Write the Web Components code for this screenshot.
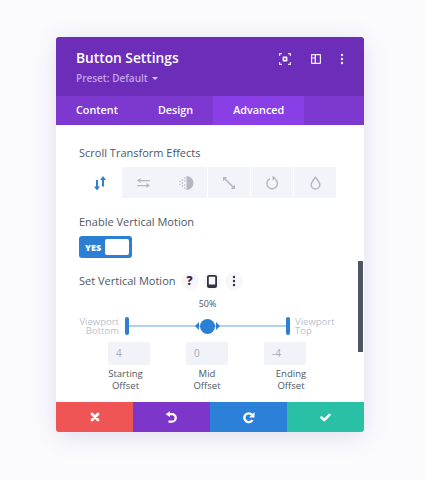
<!DOCTYPE html>
<html><head><meta charset="utf-8">
<style>
html,body{margin:0;padding:0;height:100%;background:#fbfbfe;font-family:"Open Sans","Liberation Sans",sans-serif}
body{display:flex;flex-direction:column;align-items:flex-start;padding:37px 0 0 56px;box-sizing:border-box;height:480px;overflow:hidden}
</style></head><body>
<button-settings></button-settings>
<script>
const I={
frame:'<svg width="12" height="12" viewBox="0 0 12 12" fill="none" stroke="#e6d8f8" stroke-width="1.2"><path d="M.6 3V.6H3M9 .6h2.400V3M11.400 9v2.400H9M3 11.400H.6V9"/><rect x="3.600" y="3.600" width="4.800" height="4.800" rx="1" fill="#fff" stroke="none"/><circle cx="6" cy="6" r="1" fill="#6c2eb9" stroke="none"/></svg>',
cols:'<svg width="10" height="10" viewBox="0 0 10 10"><path fill="#f3ecfc" fill-rule="evenodd" d="M1 0h8a1 1 0 0 1 1 1v8a1 1 0 0 1-1 1H1a1 1 0 0 1-1-1V1a1 1 0 0 1 1-1zM1.200 1.200v2.200h2.400V1.200zM1.200 4.600v4.200h2.400V4.600zM5 1.200v7.600h3.800V1.200z"/></svg>',
dots:c=>`<svg width="4" height="12" viewBox="0 0 4 12" fill="${c}"><circle cx="2" cy="2" r="1.2"/><circle cx="2" cy="6" r="1.2"/><circle cx="2" cy="10" r="1.2"/></svg>`,
vert:'<svg width="14" height="16" viewBox="0 0 14 16" fill="#2b7fd4"><path d="M3 5h2v6.500h2L4 15.500 1 11.500h2zM10 1l3 4h-2v6.500H9V5H7z"/></svg>',
horz:'<svg width="15" height="12" viewBox="0 0 15 12" fill="#b5b8c3"><path d="M4.500 1v1.900H14v1.300H4.500V6L1 3.500zM10.500 6v1.900H1v1.300h9.500V11L14 8.500z"/></svg>',
fade:'<svg width="16" height="16" viewBox="0 0 16 16" fill="#b5b8c3"><path d="M8.500 1a7 7 0 0 1 0 14z"/><circle cx="6.800" cy="3" r=".8"/><circle cx="6.800" cy="6" r=".8"/><circle cx="6.800" cy="10" r=".8"/><circle cx="6.800" cy="13" r=".8"/><circle cx="4.500" cy="5" r=".8"/><circle cx="4.500" cy="8" r=".8"/><circle cx="4.500" cy="11" r=".8"/><circle cx="2" cy="6.500" r=".7"/><circle cx="2" cy="9.500" r=".7"/></svg>',
scale:'<svg width="14" height="14" viewBox="0 0 14 14" fill="none" stroke="#b5b8c3" stroke-width="1.600"><path d="M2.500 2.500l9 9"/><path d="M1 1h4.200L1 5.200zM13 13H8.800L13 8.800z" fill="#b5b8c3" stroke="none"/></svg>',
rot:'<svg width="14" height="15" viewBox="0 0 14 15" fill="none" stroke="#b5b8c3" stroke-width="1.500"><path d="M10.300 4.200A5.300 5.300 0 1 1 5 3.600"/><path d="M7.500.6v5l3.600-2.300z" fill="#b5b8c3" stroke="none"/></svg>',
drop:'<svg width="11" height="14" viewBox="0 0 11 14" fill="none" stroke="#b5b8c3" stroke-width="1.500"><path d="M5.500 1.200C4 3.400 1.200 6 1.200 8.800a4.300 4.300 0 0 0 8.600 0C9.800 6 7 3.400 5.500 1.200z"/></svg>',
phone:'<svg width="10" height="13" viewBox="0 0 10 13"><path fill="#2d3340" fill-rule="evenodd" d="M2 0h6a2 2 0 0 1 2 2v9a2 2 0 0 1-2 2H2a2 2 0 0 1-2-2V2a2 2 0 0 1 2-2zM1.800 1.800v7.700h6.400V1.800z"/></svg>',
x:'<svg width="10" height="10" viewBox="0 0 10 10" stroke="#fff" stroke-width="2.800" stroke-linecap="round"><path d="M2 2l6 6M8 2l-6 6"/></svg>',
undo:'<svg width="13" height="13" viewBox="0 0 13 13" fill="none" stroke="#fff" stroke-width="2.300"><path d="M4 3.200h3a3.700 3.700 0 0 1 0 7.400H3.500"/><path d="M.6 3.200L5 .3v5.800z" fill="#fff" stroke="none"/></svg>',
redo:'<svg width="13" height="13" viewBox="0 0 13 13" fill="none" stroke="#fff" stroke-width="2.400"><path d="M10 3.800A4.400 4.400 0 1 0 10.500 9"/><path d="M12.500 1v5.500H7z" fill="#fff" stroke="none"/></svg>',
check:'<svg width="11" height="9" viewBox="0 0 12 10" fill="none" stroke="#fff" stroke-width="2.800" stroke-linecap="round" stroke-linejoin="round"><path d="M1.600 5l3 3 5.800-6"/></svg>'
};
class FieldLabel extends HTMLElement{constructor(){super();this.attachShadow({mode:'open'}).innerHTML=`<style>:host{display:block;font-size:11px;font-weight:500;line-height:14px;color:#4c5866}</style><slot></slot>`}}
customElements.define('field-label',FieldLabel);
class OffsetField extends HTMLElement{constructor(){super();this.attachShadow({mode:'open'}).innerHTML=`<style>:host{display:flex;flex-direction:column;align-items:center;width:78px;font-size:9.500px;color:#4c5866;line-height:12px;text-align:center}
.v{width:42px;height:23px;box-sizing:border-box;background:#f1f3f9;border-radius:2px;color:#a5acb8;font-size:10px;line-height:23px;text-align:left;padding-left:8px;margin-bottom:3px}
.t{padding:0 var(--rp,0) 0 var(--lp,0)}</style><div class="v">${this.getAttribute('value')}</div><div class="t"><slot></slot></div>`}}
customElements.define('offset-field',OffsetField);
class ButtonSettings extends HTMLElement{constructor(){super();const tabs=[['Content',0],['Design',0],['Advanced',1]];
const eff=[I.vert,I.horz,I.fade,I.scale,I.rot,I.drop];
this.attachShadow({mode:'open'}).innerHTML=`<style>
:host{display:flex;flex-direction:column;width:308px;height:395px;border-radius:3px;box-shadow:0 4px 24px rgba(80,70,150,.16);background:#fff;position:relative;overflow:hidden;color:#4c5866}
.head{height:59px;box-sizing:border-box;background:#6c2eb9;padding:12px 20px 0;display:flex;justify-content:space-between}
h1{margin:0;font-size:13.750px;line-height:17px;font-weight:600;color:#fff}
.preset{font-size:10px;font-weight:600;line-height:14px;color:#c2a4ec;margin-top:5px;display:flex;align-items:center;gap:4px}
.preset i{border:3px solid transparent;border-top-color:#d8c3f5;border-bottom:0;display:block}
.acts{display:flex;align-items:center;gap:19px;height:17px;margin-top:1px}
.acts span{display:flex;justify-content:center;width:12px}
.acts span:last-child{width:4px;margin-left:-1px}
.tabs{height:29px;background:#7d39cf;display:flex;font-size:10.800px;font-weight:600;color:#fff}
.tab{padding:0 20px;line-height:28px}
.tab.on{background:#8a3fe6}
.body{flex:1;min-height:0;overflow:hidden;padding:21px 0 0 23px}
.effects{display:flex;gap:1px;margin-top:7px;height:31px}
.effects span{width:42px;display:flex;align-items:center;justify-content:center;background:#f3f4f9}
.effects span:first-child{background:#fff}
.effects span:nth-child(3){margin-left:-1px;width:43px}
.en{margin-top:17px}
.toggle{margin-top:7px;width:53px;height:22px;box-sizing:border-box;background:#2b7fd4;border-radius:3px;display:flex;align-items:center;justify-content:space-between;padding:0 3px 0 6px;color:#fff;font-size:9px;font-weight:800}
.toggle b{width:24px;height:16px;background:#fff;border-radius:2px}
.smrow{margin-top:14px;display:flex;align-items:center;gap:4px}
.smrow field-label{margin-right:1px}
.chip{width:18px;height:18px;border-radius:9px;background:#f7f7fb;display:flex;align-items:center;justify-content:center;color:#2d3340;font-size:12px;font-weight:800;line-height:18px}
.pct{text-align:center;font-size:9px;line-height:12px;color:#4c5866;margin-top:8px;width:257px}
.slider{display:flex;align-items:center;width:258px;height:18px;margin-top:7px;font-size:9.500px;line-height:9px;font-weight:500;color:#bdc1cc}
.lbl{width:40px;text-align:right}.lbl.r{text-align:left;margin-left:5px;width:42px}.lbl.l{margin-right:6px}
.track{width:165px;height:18px;position:relative;display:flex;align-items:center;justify-content:center}
.track::before{content:"";position:absolute;left:0;right:0;top:8px;height:2px;background:#b3d0f0}
.end{position:absolute;top:0;width:4px;height:18px;border-radius:2px;background:#2b7fd4}
.knob{position:relative;display:flex;align-items:center;gap:1px}
.knob b{width:15px;height:15px;border-radius:50%;background:#2b7fd4;display:block}
.knob i{border:4px solid transparent;display:block}
.offs{display:flex;margin:7px 0 0 11px}
.foot{height:30px;display:flex;flex:none}
.foot span{flex:1;display:flex;align-items:center;justify-content:center}
.bar{position:absolute;right:1px;top:224px;width:5px;height:91px;background:#4e5563}
</style>
<div class="head"><div><h1>Button Settings</h1><div class="preset">Preset: Default <i></i></div></div>
<div class="acts"><span>${I.frame}</span><span>${I.cols}</span><span>${I.dots('#f3ecfc')}</span></div></div>
<div class="tabs">${tabs.map(t=>`<div class="tab${t[1]?' on':''}">${t[0]}</div>`).join('')}</div>
<div class="body">
<field-label>Scroll Transform Effects</field-label>
<div class="effects">${eff.map(s=>`<span>${s}</span>`).join('')}</div>
<field-label class="en">Enable Vertical Motion</field-label>
<div class="toggle">YES<b></b></div>
<div class="smrow"><field-label>Set Vertical Motion</field-label><div class="chip">?</div><div class="chip">${I.phone}</div><div class="chip">${I.dots('#2d3340')}</div></div>
<div class="pct">50%</div>
<div class="slider"><div class="lbl l">Viewport Bottom</div><div class="track"><div class="end" style="left:0"></div><div class="end" style="right:0"></div><div class="knob"><i style="border-right-color:#2b7fd4;border-left:0"></i><b></b><i style="border-left-color:#2b7fd4;border-right:0"></i></div></div><div class="lbl r">Viewport Top</div></div>
<div class="offs"><offset-field value="4" style="--rp:7px">Starting<br>Offset</offset-field><offset-field value="0">Mid<br>Offset</offset-field><offset-field value="-4" style="--lp:12px">Ending<br>Offset</offset-field></div>
</div>
<div class="bar"></div>
<div class="foot"><span style="background:#ef5555">${I.x}</span><span style="background:#7e35c9">${I.undo}</span><span style="background:#2b80d8">${I.redo}</span><span style="background:#2ac0a5">${I.check}</span></div>`}}
customElements.define('button-settings',ButtonSettings);
</script>
</body></html>
